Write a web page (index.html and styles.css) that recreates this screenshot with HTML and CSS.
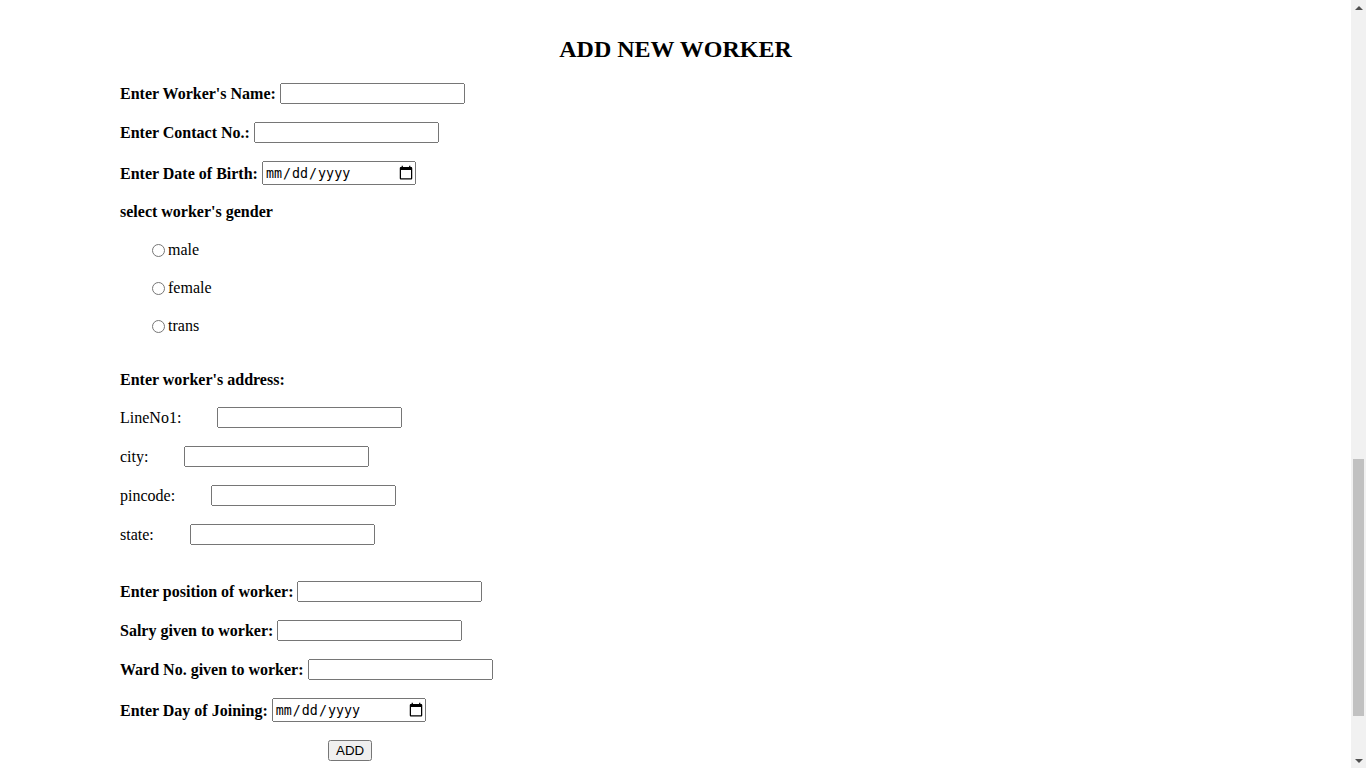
FILE: index.html
```html
<!DOCTYPE html>
<html lang="en">
<head>
<meta charset="utf-8">
<title>Add New Worker</title>
<link rel="stylesheet" href="styles.css">
</head>
<body>
<main class="page">
  <h2 class="title">ADD NEW WORKER</h2>
  <form class="worker-form">
    <div class="row first">
      <label class="lbl" for="name">Enter Worker's Name:</label>
      <input type="text" id="name">
    </div>
    <div class="row gap-18">
      <label class="lbl" for="contact">Enter Contact No.:</label>
      <input type="text" id="contact">
    </div>
    <div class="row gap-18">
      <label class="lbl" for="dob">Enter Date of Birth:</label>
      <input type="date" id="dob">
    </div>
    <div class="text-row gap-18 lbl">select worker's gender</div>
    <div class="radio-row gap-20"><input type="radio" name="gender" id="male"><label for="male">male</label></div>
    <div class="radio-row gap-20"><input type="radio" name="gender" id="female"><label for="female">female</label></div>
    <div class="radio-row gap-20"><input type="radio" name="gender" id="trans"><label for="trans">trans</label></div>

    <div class="text-row gap-36 lbl">Enter worker's address:</div>
    <div class="row addr gap-18">
      <label for="line1">LineNo1:</label>
      <input type="text" id="line1">
    </div>
    <div class="row addr gap-18">
      <label for="city">city:</label>
      <input type="text" id="city">
    </div>
    <div class="row addr gap-18">
      <label for="pin">pincode:</label>
      <input type="text" id="pin">
    </div>
    <div class="row addr gap-18">
      <label for="state">state:</label>
      <input type="text" id="state">
    </div>

    <div class="row gap-36">
      <label class="lbl" for="position">Enter position of worker:</label>
      <input type="text" id="position">
    </div>
    <div class="row gap-18">
      <label class="lbl" for="salary">Salry given to worker:</label>
      <input type="text" id="salary">
    </div>
    <div class="row gap-18">
      <label class="lbl" for="ward">Ward No. given to worker:</label>
      <input type="text" id="ward">
    </div>
    <div class="row gap-18">
      <label class="lbl" for="doj">Enter Day of Joining:</label>
      <input type="date" id="doj">
    </div>
    <div class="btn-row gap-18">
      <button type="submit" class="add-btn">ADD</button>
    </div>
  </form>
</main>
<div class="scrollbar" aria-hidden="true">
  <div class="sb-btn"><span class="arrow-up"></span></div>
  <div class="sb-track"><div class="sb-thumb"></div></div>
  <div class="sb-btn"><span class="arrow-down"></span></div>
</div>
</body>
</html>
```

FILE: styles.css
```css
html, body {
  margin: 0;
  padding: 0;
  background: #ffffff;
}

body {
  display: flex;
  height: 100vh;
  overflow: hidden;
  font-family: "Liberation Serif", "Times New Roman", serif;
  font-size: 16px;
  color: #000000;
}

.page {
  flex: 1;
  min-width: 0;
}

.title {
  margin: 35px 0 0;
  font-size: 24px;
  line-height: 28px;
  font-weight: bold;
  text-align: center;
}

.worker-form {
  padding-left: 120px;
  margin-top: 20px;
}

.lbl {
  font-weight: bold;
}

.row {
  display: flex;
  align-items: center;
  gap: 4px;
  line-height: 17px;
}

.row.addr {
  gap: 36px;
}

input[type="date"] {
  box-sizing: border-box;
  width: 154px;
  height: 24px;
}

input[type="date"]::-webkit-calendar-picker-indicator {
  width: 16px;
  height: 17px;
  padding: 0;
  margin: 0;
}

.text-row {
  height: 18px;
  line-height: 18px;
}

.radio-row {
  display: flex;
  align-items: center;
  height: 18px;
  line-height: 18px;
  padding-left: 27px;
}

.radio-row input {
  margin: 0 3px 0 5px;
}

.btn-row {
  padding-left: 208px;
}

.gap-18 { margin-top: 18px; }
.gap-20 { margin-top: 20px; }
.gap-36 { margin-top: 36px; }

/* scrollbar strip */
.scrollbar {
  width: 15px;
  flex: none;
  display: flex;
  flex-direction: column;
  background: #f1f1f1;
}

.sb-btn {
  height: 15px;
  display: flex;
  align-items: center;
  justify-content: center;
}

.arrow-up,
.arrow-down {
  width: 0;
  height: 0;
  border-left: 4px solid transparent;
  border-right: 4px solid transparent;
}

.arrow-up {
  border-bottom: 4px solid #505050;
}

.arrow-down {
  border-top: 4px solid #505050;
}

.sb-track {
  flex: 1;
  display: flex;
  flex-direction: column;
  justify-content: flex-end;
  padding: 0 2px 37px;
}

.sb-thumb {
  height: 257px;
  background: #c1c1c1;
}
```
